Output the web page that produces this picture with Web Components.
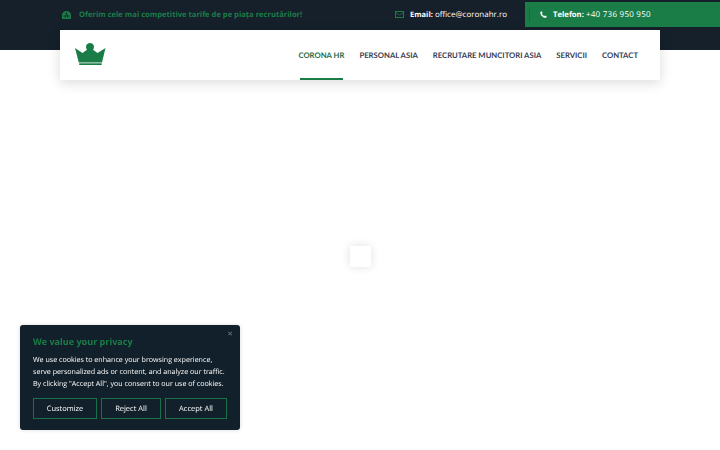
<!DOCTYPE html>
<html lang="ro">
<head>
<meta charset="utf-8">
<title>Corona HR</title>
<style>
html,body{margin:0;padding:0;background:#fff;}
body{width:720px;height:450px;overflow:hidden;position:relative;font-family:"Open Sans","Liberation Sans",sans-serif;text-rendering:geometricPrecision;}
</style>
</head>
<body>
<site-header></site-header>
<page-loader></page-loader>
<cookie-banner></cookie-banner>
<script>
function def(name,html){
  customElements.define(name,class extends HTMLElement{
    constructor(){super();this.attachShadow({mode:'open'}).innerHTML=html;}
  });
}
def('top-bar',`<style>
:host{display:flex;height:30px;box-sizing:border-box;padding-left:62px;align-items:stretch;font-family:"Open Sans",sans-serif;font-size:8px;}
.offer{display:flex;align-items:center;gap:8px;color:#1a7d48;font-weight:700;width:333px;padding-bottom:1px;box-sizing:border-box;font-size:7.6px;}
.mail{display:flex;align-items:center;gap:6px;color:#fff;width:130px;padding-bottom:1px;box-sizing:border-box;}
.mail b{font-weight:700;font-size:7.5px}
.phone{flex:1;margin:2px 0 3px;background:#1a7d48;color:#fff;display:flex;align-items:center;padding-left:4px;box-sizing:border-box;position:relative;}
.rule{width:1px;height:15px;background:#176b3f;margin-right:10px}
.num{letter-spacing:.25px}
.phone b{font-weight:700;font-size:7.7px}
svg{display:block;flex:none}
</style>
<div class="offer"><svg width="9" height="8" viewBox="0 0 9 8"><path fill="#1a7d48" d="M4.500 0C2 0 0 1.800 0 4.200V7c0 .6.400 1 1 1h7c.6 0 1-.4 1-1V4.200C9 1.800 7 0 4.500 0z"/><path fill="none" stroke="#15202b" stroke-width=".7" d="M4.500 1.500 3 7M4.500 1.500 6 7M1.300 5h6.400"/></svg><span>Oferim cele mai competitive tarife de pe piața recrutărilor!</span></div>
<div class="mail"><svg width="9" height="7" viewBox="0 0 9 7"><rect x=".5" y=".5" width="8" height="6" fill="none" stroke="#1a7d48"/><path d="M.5 1.500 4.500 4 8.500 1.500" fill="none" stroke="#1a7d48" stroke-width=".8"/></svg><span><b>Email:</b> office@coronahr.ro</span></div>
<div class="phone"><i class="rule"></i><svg width="7" height="7" viewBox="0 0 8 8" style="margin-right:6px"><path fill="#fff" d="M1.800.2 3 2 2.200 3c.5 1.200 1.400 2.100 2.700 2.700L5.900 5 7.800 6.200 7 7.700C3.500 8 .2 4.700.3 1z"/></svg><div><b>Telefon:</b> <span class="num">+40 736 950 950</span></div></div>`);
def('nav-link',`<style>
:host{display:flex;align-items:center;height:100%;position:relative;color:#343c52;font-family:Lato,"Liberation Sans",sans-serif;font-weight:700;font-size:7.7px;white-space:nowrap;padding-bottom:1px;box-sizing:border-box;}
:host([active]){color:#1f6b47;}
:host([active])::after{content:"";position:absolute;left:1.5px;right:1.5px;bottom:0;height:2px;background:#1a7d48;}
</style><slot></slot>`);
def('main-nav',`<style>
:host{display:flex;height:50px;margin:0 60px;background:#fff;box-shadow:0 3px 12px rgba(0,0,0,.14);align-items:center;padding-left:15px;padding-right:22px;box-sizing:border-box;}
svg{display:block;margin-top:-3px}
nav{margin-left:auto;display:flex;gap:15px;height:100%;}
</style>
<svg width="31" height="22" viewBox="0 0 31 22"><path fill="#1a7d48" d="M0 5 7.500 10 12 6.800C11.300 6 11 5 11 3.800 11 1.600 13 0 15 0s4 1.600 4 3.800C19 5 18.700 6 18 6.800L22.500 10 30.500 5 27 19.500H3.800Z"/><rect x="4.200" y="20.300" width="22.500" height="1.700" fill="#1a7d48"/></svg>
<nav><nav-link active>CORONA HR</nav-link><nav-link>PERSONAL ASIA</nav-link><nav-link>RECRUTARE MUNCITORI ASIA</nav-link><nav-link>SERVICII</nav-link><nav-link>CONTACT</nav-link></nav>`);
def('site-header',`<style>
:host{display:block;background:linear-gradient(#15202b 50px,#fff 50px);}
</style><top-bar></top-bar><main-nav></main-nav>`);
def('page-loader',`<style>
:host{display:block;position:absolute;left:350px;top:246px;width:21px;height:21px;background:#fff;box-shadow:0 0 10px rgba(0,0,0,.13);}
</style>`);
def('cookie-btn',`<style>
:host{display:flex;align-items:center;justify-content:center;height:21px;box-sizing:border-box;border:1px solid #1a7048;color:#fff;font-size:7.5px;flex:none;}
</style><slot></slot>`);
def('cookie-banner',`<style>
:host{display:block;position:fixed;left:20px;top:325px;width:220px;height:105px;box-sizing:border-box;background:#12202b;border-radius:3px;padding:10px 13px;font-family:"Open Sans","Noto Sans",sans-serif;color:#fff;box-shadow:0 0 4px rgba(0,0,0,.15);}
h2{margin:0;font-size:9.05px;font-weight:700;color:#1a7d48;line-height:14px;}
p{margin:5px 0 8px;font-size:7.12px;line-height:12px;white-space:nowrap;color:#fff}
.row{display:flex;gap:4px}
.x{position:absolute;right:7px;top:6px;font-size:7px;line-height:8px;color:#6f7d88;}
</style>
<span class="x">✕</span>
<h2>We value your privacy</h2>
<p>We use cookies to enhance your browsing experience,<br>serve personalized ads or content, and analyze our traffic.<br>By clicking "Accept All", you consent to our use of cookies.</p>
<div class="row"><cookie-btn style="width:64px">Customize</cookie-btn><cookie-btn style="width:60px">Reject All</cookie-btn><cookie-btn style="width:62px">Accept All</cookie-btn></div>`);
</script>
</body>
</html>
